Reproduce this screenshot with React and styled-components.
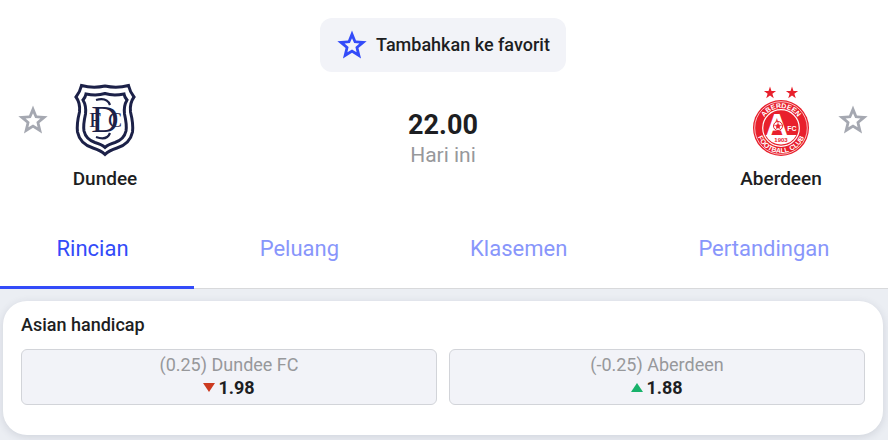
import React, { useState } from 'react'
import styled, { createGlobalStyle, ThemeProvider } from 'styled-components'

const theme = {
  colors: {
    text: '#1d1e22',
    muted: '#97989b',
    primary: '#334bf9',
    primaryLight: '#8896fb',
    star: '#a5a8b1',
    up: '#18b26b',
    down: '#cc3a20',
    border: '#d2d4d9',
    line: '#d8d9db',
    navy: '#1c2148',
    red: '#e8202c',
  },
  background: {
    page: '#ebeef3',
    panel: '#ffffff',
    control: '#f2f3f8',
  },
}

const GlobalStyle = createGlobalStyle`
  * {
    box-sizing: border-box;
  }

  body {
    margin: 0;
    background: ${props => props.theme.background.page};
    color: ${props => props.theme.colors.text};
    font-family: Roboto, 'Liberation Sans', sans-serif;
    font-size: 18px;
    line-height: 24px;
  }

  button {
    font: inherit;
    color: inherit;
    cursor: pointer;
  }
`

const Header = styled.header`
  display: flex;
  flex-direction: column;
  align-items: center;
  padding: 18px 2px 0 0;
  background: ${props => props.theme.background.panel};
`

const FavoriteButton = styled.button`
  display: flex;
  align-items: center;
  gap: 8px;
  height: 54px;
  padding: 0 16px;
  border: 0;
  border-radius: 12px;
  background: ${props => props.theme.background.control};
  font-weight: 500;

  svg {
    color: ${props => props.theme.colors.primary};
  }
`

const Match = styled.div`
  display: grid;
  grid-template-columns: 1fr auto 1fr;
  width: 100%;
  padding: 10px 17px 0;
`

const Side = styled.div`
  display: flex;
  align-items: flex-start;
  justify-content: ${props => (props.$away ? 'flex-end' : 'flex-start')};
`

const StarButton = styled.button`
  display: flex;
  margin: 22px 0 0;
  padding: 0;
  border: 0;
  background: none;
  color: ${props => props.theme.colors.star};
`

const Team = styled.div`
  display: flex;
  flex-direction: column;
  align-items: center;
  gap: 9px;
  width: 112px;
`

const TeamName = styled.span`
  font-size: 19px;
  font-weight: 500;
`

const Kickoff = styled.div`
  display: flex;
  flex-direction: column;
  align-items: center;
  padding-top: 27px;
`

const Time = styled.time`
  font-size: 27px;
  font-weight: 700;
  line-height: 32px;
`

const Day = styled.span`
  color: ${props => props.theme.colors.muted};
  font-size: 21px;
  line-height: 28px;
`

const Tabs = styled.nav`
  display: flex;
  padding-top: 20px;
  border-bottom: 1px solid ${props => props.theme.colors.line};
  background: ${props => props.theme.background.panel};
`

const Tab = styled.button`
  flex: 1 1 auto;
  height: 78px;
  margin-bottom: -1px;
  padding: 0 9px;
  border: 0;
  border-bottom: 3px solid ${props => (props.$active ? props.theme.colors.primary : 'transparent')};
  background: none;
  color: ${props => (props.$active ? props.theme.colors.primary : props.theme.colors.primaryLight)};
  font-size: 22px;

  &:first-child {
    padding-left: 0;
  }

  &:last-child {
    padding-right: 2px;
  }
`

const Card = styled.section`
  margin: 12px 5px 5px 3px;
  padding: 12px 18px 30px;
  border-radius: 24px;
  background: ${props => props.theme.background.panel};
  box-shadow: 0 2px 8px rgba(40, 50, 80, 0.14);
`

const CardTitle = styled.h2`
  margin: 0 0 12px;
  font-size: 18px;
  font-weight: 500;
  line-height: 24px;
`

const Odds = styled.div`
  display: grid;
  grid-template-columns: 1fr 1fr;
  gap: 12px;
`

const OddButton = styled.button`
  display: flex;
  flex-direction: column;
  align-items: center;
  justify-content: center;
  height: 56px;
  padding: 0 0 2px;
  border: 1px solid ${props => props.theme.colors.border};
  border-radius: 6px;
  background: ${props => props.theme.background.control};
  line-height: 23px;
`

const OddLabel = styled.span`
  color: ${props => props.theme.colors.muted};
`

const OddValue = styled.span`
  display: flex;
  align-items: center;
  gap: 3px;
  font-weight: 700;
`

const starPath = (cx, cy, outer, inner) => {
  const points = Array.from({ length: 10 }, (_, i) => {
    const radius = i % 2 ? inner : outer
    const angle = (i * Math.PI) / 5 - Math.PI / 2
    return `${(cx + radius * Math.cos(angle)).toFixed(2)} ${(cy + radius * Math.sin(angle)).toFixed(2)}`
  })
  return `M${points.join(' L')} Z`
}

const StarIcon = () => (
  <svg width="32" height="32" viewBox="0 0 32 32" aria-hidden="true">
    <path
      d={`${starPath(16, 17, 15.4, 6.8)} ${starPath(16, 17, 7.8, 3.6)}`}
      fill="currentColor"
      fillRule="evenodd"
    />
  </svg>
)

const Arrow = ({ up }) => (
  <svg width="12" height="9" viewBox="0 0 12 9" aria-hidden="true">
    {up
      ? <path d="M0 9 L6 0 L12 9 Z" fill={theme.colors.up} />
      : <path d="M0 0 H12 L6 9 Z" fill={theme.colors.down} />
    }
  </svg>
)

const DundeeCrest = () => (
  <svg width="66" height="76" viewBox="0 0 66 76" fill="none" aria-hidden="true">
    <g stroke={theme.colors.navy} strokeWidth="3">
      <path d="M9.500 3.500 Q21 6.500 33 4 Q45 6.500 56.500 3.500 Q58 10 62 15 Q57.500 21 58.500 30 Q61.500 42 60.500 50 Q58 62 45 66 Q37 68.500 33 72.500 Q29 68.500 21 66 Q8 62 5.500 50 Q4.500 42 7.500 30 Q8.500 21 4 15 Q8 10 9.500 3.500 Z" />
      <path d="M14 12 Q25 14 33 11.500 Q41 14 52 12 Q52.500 15 55 18 Q51.500 24 52.500 32 Q55 43 54 49 Q52 57.500 43 60.500 Q36 62.500 33 65.500 Q30 62.500 23 60.500 Q14 57.500 12 49 Q11 43 13.500 32 Q14.500 24 11 18 Q13.500 15 14 12 Z" />
    </g>
    <g fill={theme.colors.navy} fontFamily="'Liberation Serif', serif" textAnchor="middle">
      <text x="33" y="50" fontSize="38">D</text>
      <text x="23" y="45" fontSize="22">F</text>
      <text x="43" y="45" fontSize="21">C</text>
    </g>
    <path d="M24 18 Q35 15 38 23 M24 55 Q35 59 38 51" stroke={theme.colors.navy} strokeWidth="2.200" />
  </svg>
)

const AberdeenCrest = () => (
  <svg width="58" height="76" viewBox="0 0 58 76" aria-hidden="true">
    <g fill={theme.colors.red}>
      <path d={starPath(18, 11, 6.4, 2.5)} />
      <path d={starPath(40, 11, 6.4, 2.5)} />
      <circle cx="29" cy="46" r="28" />
    </g>
    <circle cx="29" cy="46" r="26.300" fill="none" stroke="#ffffff" strokeWidth="0.700" />
    <circle cx="29" cy="46" r="18.300" fill="none" stroke="#ffffff" strokeWidth="1.200" />
    <path d="M13.500 53 H44.500 A17.500 17.500 0 0 1 13.500 53 Z" fill="#ffffff" />
    <defs>
      <path id="ringTop" d="M9.200 46 A19.800 19.800 0 0 1 48.800 46" />
      <path id="ringBottom" d="M4.400 43 A24.800 24.800 0 1 0 53.600 43" />
    </defs>
    <g fontFamily="'Liberation Sans', sans-serif" fontWeight="700" textAnchor="middle" fill="#ffffff">
      <text fontSize="7">
        <textPath href="#ringTop" startOffset="50%">ABERDEEN</textPath>
      </text>
      <text fontSize="7">
        <textPath href="#ringBottom" startOffset="50%">FOOTBALL CLUB</textPath>
      </text>
      <text x="25" y="54" fontSize="31">A</text>
      <text x="40" y="49" fontSize="7">FC</text>
      <text x="29" y="60" fontSize="6" fill={theme.colors.red}>1903</text>
    </g>
    <circle cx="26" cy="44" r="4.500" fill="#ffffff" stroke={theme.colors.red} strokeWidth="1" />
    <path
      d="M26 42 L28 43.500 L27.200 46 H24.800 L24 43.500 Z M26 42 V40 M28 43.500 L30 43 M27.200 46 L28.500 47.500 M24.800 46 L23.500 47.500 M24 43.500 L22 43"
      fill={theme.colors.red}
      stroke={theme.colors.red}
      strokeWidth="0.700"
    />
  </svg>
)

const TABS = ['Rincian', 'Peluang', 'Klasemen', 'Pertandingan']

const ODDS = [
  { label: '(0.25) Dundee FC', value: '1.98', up: false },
  { label: '(-0.25) Aberdeen', value: '1.88', up: true },
]

const App = () => {
  const [tab, setTab] = useState(TABS[0])

  return (
    <ThemeProvider theme={theme}>
      <GlobalStyle />
      <Header>
        <FavoriteButton type="button">
          <StarIcon />
          Tambahkan ke favorit
        </FavoriteButton>
        <Match>
          <Side>
            <StarButton type="button" aria-label="Dundee"><StarIcon /></StarButton>
            <Team>
              <DundeeCrest />
              <TeamName>Dundee</TeamName>
            </Team>
          </Side>
          <Kickoff>
            <Time>22.00</Time>
            <Day>Hari ini</Day>
          </Kickoff>
          <Side $away>
            <Team>
              <AberdeenCrest />
              <TeamName>Aberdeen</TeamName>
            </Team>
            <StarButton type="button" aria-label="Aberdeen"><StarIcon /></StarButton>
          </Side>
        </Match>
      </Header>
      <Tabs>
        {TABS.map(name => (
          <Tab key={name} type="button" $active={name === tab} onClick={() => setTab(name)}>{name}</Tab>
        ))}
      </Tabs>
      <Card>
        <CardTitle>Asian handicap</CardTitle>
        <Odds>
          {ODDS.map(odd => (
            <OddButton key={odd.label} type="button">
              <OddLabel>{odd.label}</OddLabel>
              <OddValue><Arrow up={odd.up} />{odd.value}</OddValue>
            </OddButton>
          ))}
        </Odds>
      </Card>
    </ThemeProvider>
  )
}

export default App
